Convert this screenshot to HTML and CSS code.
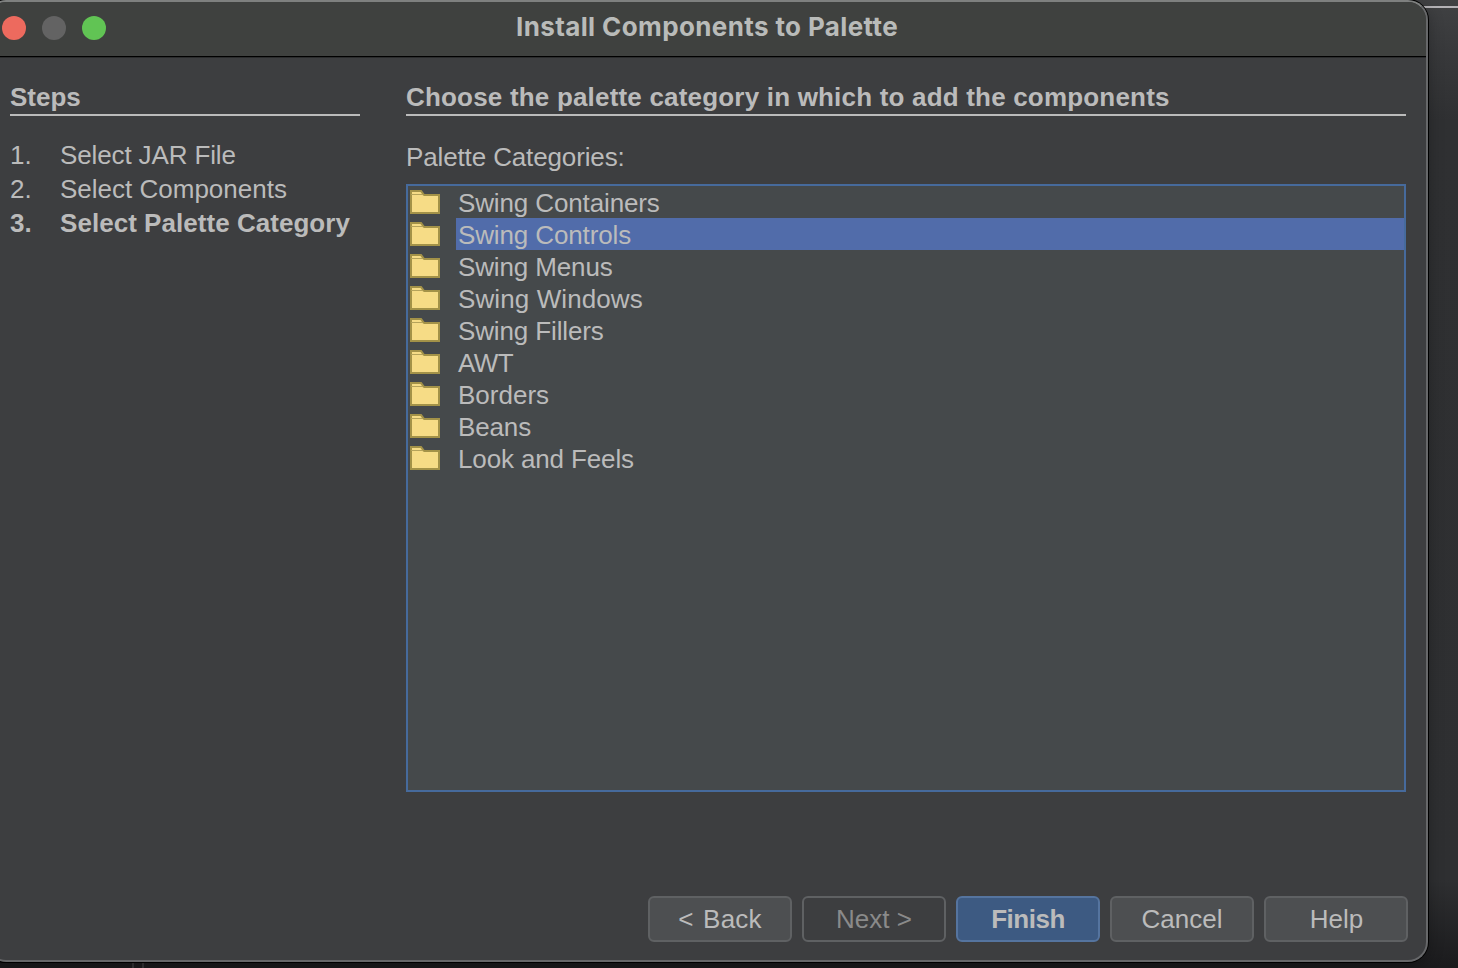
FILE: index.html
```html
<!DOCTYPE html>
<html lang="en">
<head>
<meta charset="utf-8">
<title>Install Components to Palette</title>
<link rel="stylesheet" href="styles.css">
</head>
<body>
<svg class="defs" width="0" height="0">
  <symbol id="folder" viewBox="0 0 30 24">
    <path d="M0 0H11.5L14.5 4H30V24H0Z" fill="#a39248"/>
    <path d="M2 2H10.5L12 4H2Z" fill="#f6dc86"/>
    <path d="M2 5H12.5L14 6H28V22H2Z" fill="#f6dc86"/>
    <path d="M1 4.5H13" stroke="#b5a35a" stroke-width="1"/>
  </symbol>
</svg>
<div class="backdrop-line"></div>
<div class="backdrop-ticks"></div>
<main class="dialog">
  <header class="titlebar">
    <div class="lights"><i class="light close"></i><i class="light minimize"></i><i class="light zoom"></i></div>
    <h1 class="title">Install Components to Palette</h1>
  </header>
  <div class="body">
    <aside class="steps">
      <h2 class="heading">Steps</h2>
      <ol class="step-list">
        <li class="step"><span class="num">1.</span><span class="step-name tight">Select JAR File</span></li>
        <li class="step"><span class="num">2.</span><span class="step-name">Select Components</span></li>
        <li class="step current"><span class="num">3.</span><span class="step-name">Select Palette Category</span></li>
      </ol>
    </aside>
    <section class="panel">
      <h2 class="heading wide">Choose the palette category in which to add the components</h2>
      <div class="label tight">Palette Categories:</div>
      <ul class="list">
        <li class="row"><svg class="icon"><use href="#folder"/></svg><span class="name tight">Swing Containers</span></li>
        <li class="row selected"><svg class="icon"><use href="#folder"/></svg><span class="name tight">Swing Controls</span></li>
        <li class="row"><svg class="icon"><use href="#folder"/></svg><span class="name tight">Swing Menus</span></li>
        <li class="row"><svg class="icon"><use href="#folder"/></svg><span class="name loose">Swing Windows</span></li>
        <li class="row"><svg class="icon"><use href="#folder"/></svg><span class="name tight">Swing Fillers</span></li>
        <li class="row"><svg class="icon"><use href="#folder"/></svg><span class="name awt">AWT</span></li>
        <li class="row"><svg class="icon"><use href="#folder"/></svg><span class="name">Borders</span></li>
        <li class="row"><svg class="icon"><use href="#folder"/></svg><span class="name tight">Beans</span></li>
        <li class="row"><svg class="icon"><use href="#folder"/></svg><span class="name tight">Look and Feels</span></li>
      </ul>
    </section>
  </div>
  <footer class="actions">
    <button class="btn back">&lt; Back</button>
    <button class="btn" disabled>Next &gt;</button>
    <button class="btn primary">Finish</button>
    <button class="btn">Cancel</button>
    <button class="btn help">Help</button>
  </footer>
</main>
</body>
</html>
```

FILE: styles.css
```css
* { box-sizing: border-box; }
html, body { height: 100%; }
body {
  margin: 0;
  overflow: hidden;
  position: relative;
  background: linear-gradient(180deg, #404143 0, #38393b 50px, #2f3032 120px, #2e2f31 880px, #1b1b1d 966px);
  font-family: "Liberation Sans", Arial, sans-serif;
  font-size: 26px;
  line-height: 32px;
  color: #bbb;
}
.defs { position: absolute; }
.backdrop-line { position: absolute; top: 6px; right: 0; width: 40px; height: 2px; background: #b4b2b6; }
.backdrop-ticks { position: absolute; left: 132px; bottom: 0; width: 12px; height: 5px; border: solid #343436; border-width: 0 2px; }
.dialog {
  position: relative;
  display: flex;
  flex-direction: column;
  width: 1442px;
  height: 962px;
  margin-left: -14px;
  border: 2px solid #67686a;
  border-top-color: #7e807f;
  border-radius: 20px;
  background: #3d3e40;
  box-shadow: 0 0 0 1px #000, 0 4px 16px rgba(0, 0, 0, .3);
  overflow: hidden;
}
.titlebar {
  display: flex;
  align-items: center;
  flex: none;
  height: 56px;
  padding-bottom: 4px;
  border-bottom: 1px solid #2b2c2d;
  box-shadow: inset 0 -1px #000;
  background: #3f413f;
}
.lights { display: flex; gap: 16px; width: 0; padding-left: 14px; }
.light { flex: none; width: 24px; height: 24px; border-radius: 50%; }
.close { background: #ed6a5e; }
.minimize { background: #636363; }
.zoom { background: #61c454; }
.title {
  flex: 1;
  margin: 0 0 2px 514px;
  font: 700 26px/32px Inter, sans-serif;
  letter-spacing: .38px;
  color: #b9bbb9;
}
.body { display: flex; flex: 1; gap: 46px; padding: 22px 20px 0 22px; }
.steps { width: 350px; }
.panel { width: 1000px; }
.heading {
  height: 36px;
  margin: 0;
  padding-top: 1px;
  border-bottom: 2px solid #bbb;
  font-size: 26px;
  font-weight: 700;
  line-height: 32px;
  white-space: nowrap;
}
.wide { letter-spacing: .19px; }
.tight { letter-spacing: -.13px; }
.loose { letter-spacing: .1px; }
.awt { letter-spacing: -.6px; }
.step-list { margin: 22px 0 0; padding: 0; list-style: none; }
.step { display: flex; height: 34px; line-height: 34px; white-space: nowrap; }
.num { width: 50px; }
.current { font-weight: 700; }
.current .step-name { letter-spacing: .04px; }
.label { margin-top: 25px; height: 43px; }
.list {
  height: 608px;
  margin: 0;
  padding: 0;
  border: 2px solid #466a9c;
  background: #45494b;
  list-style: none;
}
.row { display: flex; height: 32px; padding-left: 2px; gap: 16px; }
.icon { flex: none; width: 30px; height: 24px; margin-top: 4px; }
.name { flex: 1; padding: 1px 2px 0; }
.selected .name { background: #516caa; }
.actions { display: flex; justify-content: flex-end; gap: 10px; padding: 0 18px 18px 0; }
.btn {
  width: 144px;
  height: 46px;
  padding: 0;
  border: 2px solid #5f6163;
  border-radius: 6px;
  background: #4d4f51;
  color: #bbb;
  font: inherit;
}
.back { word-spacing: 2px; letter-spacing: .2px; }
.help { padding-left: 1px; }
.btn:disabled { background: #3d3e40; color: #8a8a8a; }
.btn.primary { background: #3d5a82; border-color: #55749f; font-weight: 700; letter-spacing: -.5px; }
```
